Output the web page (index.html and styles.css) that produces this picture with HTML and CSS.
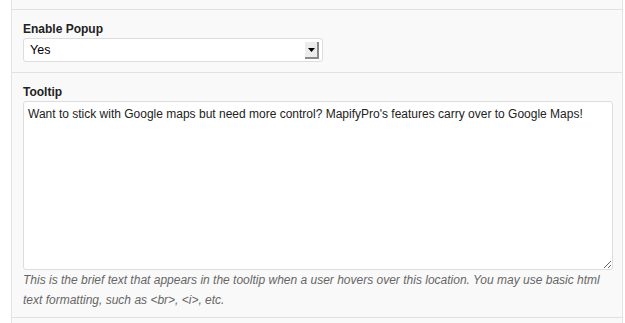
FILE: index.html
```html
<!DOCTYPE html>
<html lang="en">
<head>
    <meta charset="UTF-8">
    <meta name="viewport" content="width=device-width, initial-scale=1.0">
    <title>Location Settings</title>
    <link rel="stylesheet" href="styles.css">
</head>
<body>
    <div class="meta-box">
        <div class="field-row field-row-top"></div>

        <div class="field-row">
            <label class="field-label" for="enable-popup">Enable Popup</label>
            <div class="select-box" id="enable-popup">
                <span class="select-value">Yes</span>
                <span class="select-arrow">
                    <svg width="7" height="4" viewBox="0 0 7 4"><path d="M0 0h7L3.5 4z" fill="#000"/></svg>
                </span>
            </div>
        </div>

        <div class="field-row field-row-last">
            <label class="field-label" for="tooltip">Tooltip</label>
            <textarea class="field-textarea" id="tooltip">Want to stick with Google maps but need more control? MapifyPro's features carry over to Google Maps!</textarea>
            <p class="field-help">This is the brief text that appears in the tooltip when a user hovers over this location. You may use basic html text formatting, such as &lt;br&gt;, &lt;i&gt;, etc.</p>
        </div>

        <div class="field-row field-row-bottom"></div>
    </div>
</body>
</html>
```

FILE: styles.css
```css
/* Page */
body {
    margin: 0;
    background-color: #fff;
    font-family: "Liberation Sans", Arial, Helvetica, sans-serif;
    color: #222;
}

.meta-box {
    margin-left: 11px;
    width: 610px;
    background-color: #f9f9f9;
    border-left: 1px solid #e3e3e3;
    border-right: 1px solid #e3e3e3;
}

/* Rows */
.field-row {
    padding: 10px 11px 10px 11px;
    border-bottom: 1px solid #e1e1e1;
}
.field-row-last {
    padding-bottom: 7px;
}
.field-row-top {
    height: 9px;
    padding: 0;
}
.field-row-bottom {
    height: 10px;
    padding: 0;
    border-bottom: none;
}

.field-label {
    display: block;
    font-size: 12px;
    font-weight: bold;
    line-height: 14px;
    margin: 2px 0 2px;
    color: #222;
}

/* Fake select */
.select-box {
    width: 289px;
    height: 22px;
    display: flex;
    align-items: center;
    justify-content: space-between;
    background-color: #fff;
    border: 1px solid #ddd;
    border-radius: 3px;
    padding: 0 3px 0 6px;
    box-sizing: content-box;
}
.select-value {
    font-size: 12.5px;
    color: #000;
}
.select-arrow {
    width: 12px;
    height: 15px;
    display: flex;
    align-items: center;
    justify-content: center;
    background-color: #ececec;
    border-right: 2px solid #8a8a8a;
    border-bottom: 2px solid #8a8a8a;
    margin-top: 1px;
}

/* Textarea */
.field-textarea {
    display: block;
    width: 590px;
    height: 169px;
    box-sizing: border-box;
    margin: 1px 0 0;
    padding: 5px 4px 3px;
    border: 1px solid #ddd;
    border-radius: 3px;
    background-color: #fff;
    font-family: "Liberation Sans", Arial, Helvetica, sans-serif;
    font-size: 12px;
    line-height: 14px;
    color: #222;
    resize: both;
}

.field-help {
    margin: 0;
    font-size: 12px;
    font-style: italic;
    line-height: 20px;
    color: #666;
}
```
